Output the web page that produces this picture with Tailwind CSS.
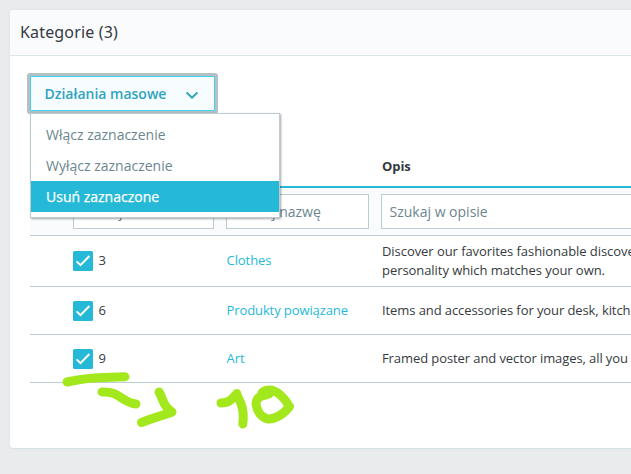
<!DOCTYPE html>
<html lang="pl">
<head>
<meta charset="utf-8">
<title>Kategorie</title>
<script src="https://cdn.jsdelivr.net/npm/@tailwindcss/browser@4"></script>
</head>
<body class="h-[474px] w-[631px] overflow-hidden bg-[#eaebec] pt-[10px] pl-[10px] font-['Open_Sans','Noto_Sans',sans-serif] text-[#363a41]">
<svg class="hidden"><symbol id="check" viewBox="0 0 20 20"><rect width="20" height="20" rx="1.5" fill="#25b9d7"/><path d="M3.6 10.4 7.5 14.2 16.4 5" fill="none" stroke="#fff" stroke-width="2"/></symbol></svg>
<main class="h-[439px] w-[621px] overflow-hidden rounded-l-[4px] border-b border-[#d3e3e6] bg-white shadow-[0_0_4px_0_#dbe6e9]">
  <header class="flex h-[46px] items-center border-b border-[#dbe6e9] bg-[#fafbfc] pl-[10px] font-['Noto_Sans','Open_Sans',sans-serif] text-[16px]"><h1 class="-mt-px tracking-[0.16px]">Kategorie (3)</h1></header>
  <section class="pl-5 pt-5">
    <div class="relative z-10 w-[185px]">
      <button class="flex h-[35px] w-full items-center justify-between rounded-[1px] border border-[#3ed2f0] bg-[#f7fdff] pl-[13.5px] pr-4 text-[14px] font-semibold text-[#30a3c0] shadow-[0_0_0_3px_#b3c1c5]"><span class="whitespace-nowrap">Działania masowe</span>
        <svg class="mt-[3px] h-3 w-3" viewBox="0 0 12 12"><path d="M.6 3.5 6 8.7 11.400 3.500" fill="none" stroke="#30a3c0" stroke-width="2"/></svg>
      </button>
      <ul class="absolute left-0 top-[37px] w-[250px] border border-[#bbcdd2] bg-white py-[5px] text-[14px] leading-[31px] text-[#6c868e] shadow-[1px_1px_2px_0_rgba(0,0,0,0.35)]">
        <li class="h-[31px] pl-[15px]">Włącz zaznaczenie</li>
        <li class="h-[31px] pl-[15px]">Wyłącz zaznaczenie</li>
        <li class="h-[31px] bg-[#25b9d7] pl-[15px] text-white [-webkit-text-stroke:0.25px_white]">Usuń zaznaczone</li>
      </ul>
    </div>
    <div class="mt-[35px] text-[13px] leading-[19px] tracking-[-0.06px]">
      <div class="grid h-[42px] grid-cols-[43px_153px_155px_1fr] items-center border-b-2 border-[#25b9d7] font-bold"><span class="col-start-4 pl-px">Opis</span></div>
      <div class="grid h-[48px] grid-cols-[43px_153px_155px_1fr] items-center border-b border-[#bbcdd2] bg-[#fafbfc] text-[14px] tracking-normal text-[#6c868e]">
        <div class="col-start-2 flex h-[35px] w-[141px] items-center border border-[#bbcdd2] bg-white pl-[7px]">Szukaj ID</div>
        <div class="flex h-[35px] w-[143px] items-center border border-[#bbcdd2] bg-white pl-[7px]">Szukaj nazwę</div>
        <div class="flex h-[35px] items-center border border-r-0 border-[#bbcdd2] bg-white pl-[7.5px]">Szukaj w opisie</div>
      </div>
      <div class="grid h-[51px] grid-cols-[43px_153px_155px_1fr] items-center border-b border-[#bbcdd2]">
        <div class="col-start-2 flex items-center gap-[5.5px]"><svg class="h-5 w-5"><use href="#check"/></svg><span class="-mt-0.5">3</span></div><a class="-mt-0.5 pl-[0.5px] text-[#25b9d7]">Clothes</a>
        <p class="overflow-hidden whitespace-nowrap pl-px">Discover our favorites fashionable discoveries<br>personality which matches your own.</p>
      </div>
      <div class="grid h-[48px] grid-cols-[43px_153px_155px_1fr] items-center border-b border-[#bbcdd2]">
        <div class="col-start-2 flex items-center gap-[5.5px]"><svg class="h-5 w-5"><use href="#check"/></svg>6</div><a class="whitespace-nowrap pl-[0.5px] tracking-[-0.1px] text-[#25b9d7]">Produkty powiązane</a>
        <p class="overflow-hidden whitespace-nowrap pl-px tracking-[-0.09px]">Items and accessories for your desk, kitchen</p>
      </div>
      <div class="grid h-[48px] grid-cols-[43px_153px_155px_1fr] items-center border-b border-[#bbcdd2]">
        <div class="col-start-2 flex items-center gap-[5.5px]"><svg class="h-5 w-5"><use href="#check"/></svg>9</div><a class="pl-[0.5px] text-[#25b9d7]">Art</a>
        <p class="overflow-hidden whitespace-nowrap pl-px tracking-[-0.09px]">Framed poster and vector images, all you</p>
      </div>
    </div>
  </section>
</main>
<svg class="pointer-events-none absolute left-0 top-0 z-20 h-[474px] w-[631px]" viewBox="0 0 631 474" fill="none" stroke="#a3e81c" stroke-width="9" stroke-linecap="round" stroke-linejoin="round">
  <path d="M67 382Q85 378 104 377.5L125 376.7"/>
  <path d="M102 392C120 391 121 402 136 404"/>
  <path d="M159 392C164 400 162 405 172 412C165 415 158 416 141.500 422.500"/>
  <path d="M221 403C230 403 233 398 236.800 393.500C238 400 245 404 242.800 424"/>
  <path d="M269 394C262 396 256.500 396 256 404C257 411 261 417 267 418.800C274 420 283 415 289.500 406.500C284 397 276 390 270 390Q264 390 262 393"/>
</svg>
</body>
</html>
